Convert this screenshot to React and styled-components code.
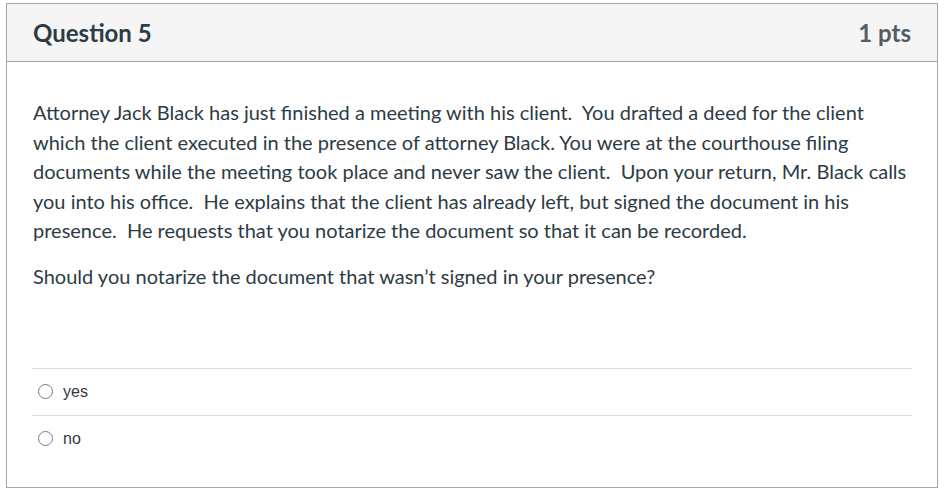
import styled, { createGlobalStyle } from 'styled-components'

const GlobalStyle = createGlobalStyle`
  body {
    margin: 0;
    background: #fff;
  }
`

const Page = styled.div`
  padding: 3px 6px 2px 6px;
`

const QuestionCard = styled.div`
  border: 1px solid #a5a5a5;
  background: #fff;
  font-family: Lato, 'Open Sans', sans-serif;
  color: #2d3b45;
`

const Header = styled.div`
  display: flex;
  justify-content: space-between;
  align-items: center;
  height: 57px;
  padding: 0 26px 0 26px;
  background: #f5f5f5;
  border-bottom: 1px solid #a5a5a5;
  h2 {
    margin: 0;
    font-size: 24px;
    font-weight: 700;
    color: #2d3b45;
  }
`

const Points = styled.span`
  font-size: 24px;
  font-weight: 700;
  color: #555c62;
`

const Body = styled.div`
  padding: 36px 25px 0 25px;
`

const Text = styled.p`
  margin: 0 0 16.5px 1px;
  font-size: 20px;
  line-height: 29.5px;
`

const Answers = styled.div`
  margin-top: 76px;
  padding-bottom: 25px;
`

const Answer = styled.label`
  display: flex;
  align-items: center;
  gap: 10px;
  height: 46px;
  padding-left: 6px;
  border-top: 1px solid #dcdcdc;
  font-family: 'Liberation Sans', Arial, sans-serif;
  font-size: 16px;
  color: #2d3b45;
`

const Radio = styled.span`
  width: 15px;
  height: 15px;
  border-radius: 50%;
  border: 1px solid #7a7a7a;
  box-sizing: border-box;
  background: #fff;
`

const answers = ['yes', 'no']

export default function App() {
  return (
    <Page>
      <GlobalStyle />
      <QuestionCard>
        <Header>
          <h2>Question 5</h2>
          <Points>1 pts</Points>
        </Header>
        <Body>
          <Text>
            Attorney Jack Black has just finished a meeting with his client.{'\u00a0 '}You drafted a deed for the client
            which the client executed in the presence of attorney Black. You were at the courthouse filing documents
            while the meeting took place and never saw the client.{'\u00a0 '}Upon your return, Mr. Black calls you into
            his office.{'\u00a0 '}He explains that the client has already left, but signed the document in his
            presence.{'\u00a0 '}He requests that you notarize the document so that it can be recorded.
          </Text>
          <Text>Should you notarize the document that wasn’t signed in your presence?</Text>
          <Answers>
            {answers.map((a) => (
              <Answer key={a}>
                <Radio />
                {a}
              </Answer>
            ))}
          </Answers>
        </Body>
      </QuestionCard>
    </Page>
  )
}
